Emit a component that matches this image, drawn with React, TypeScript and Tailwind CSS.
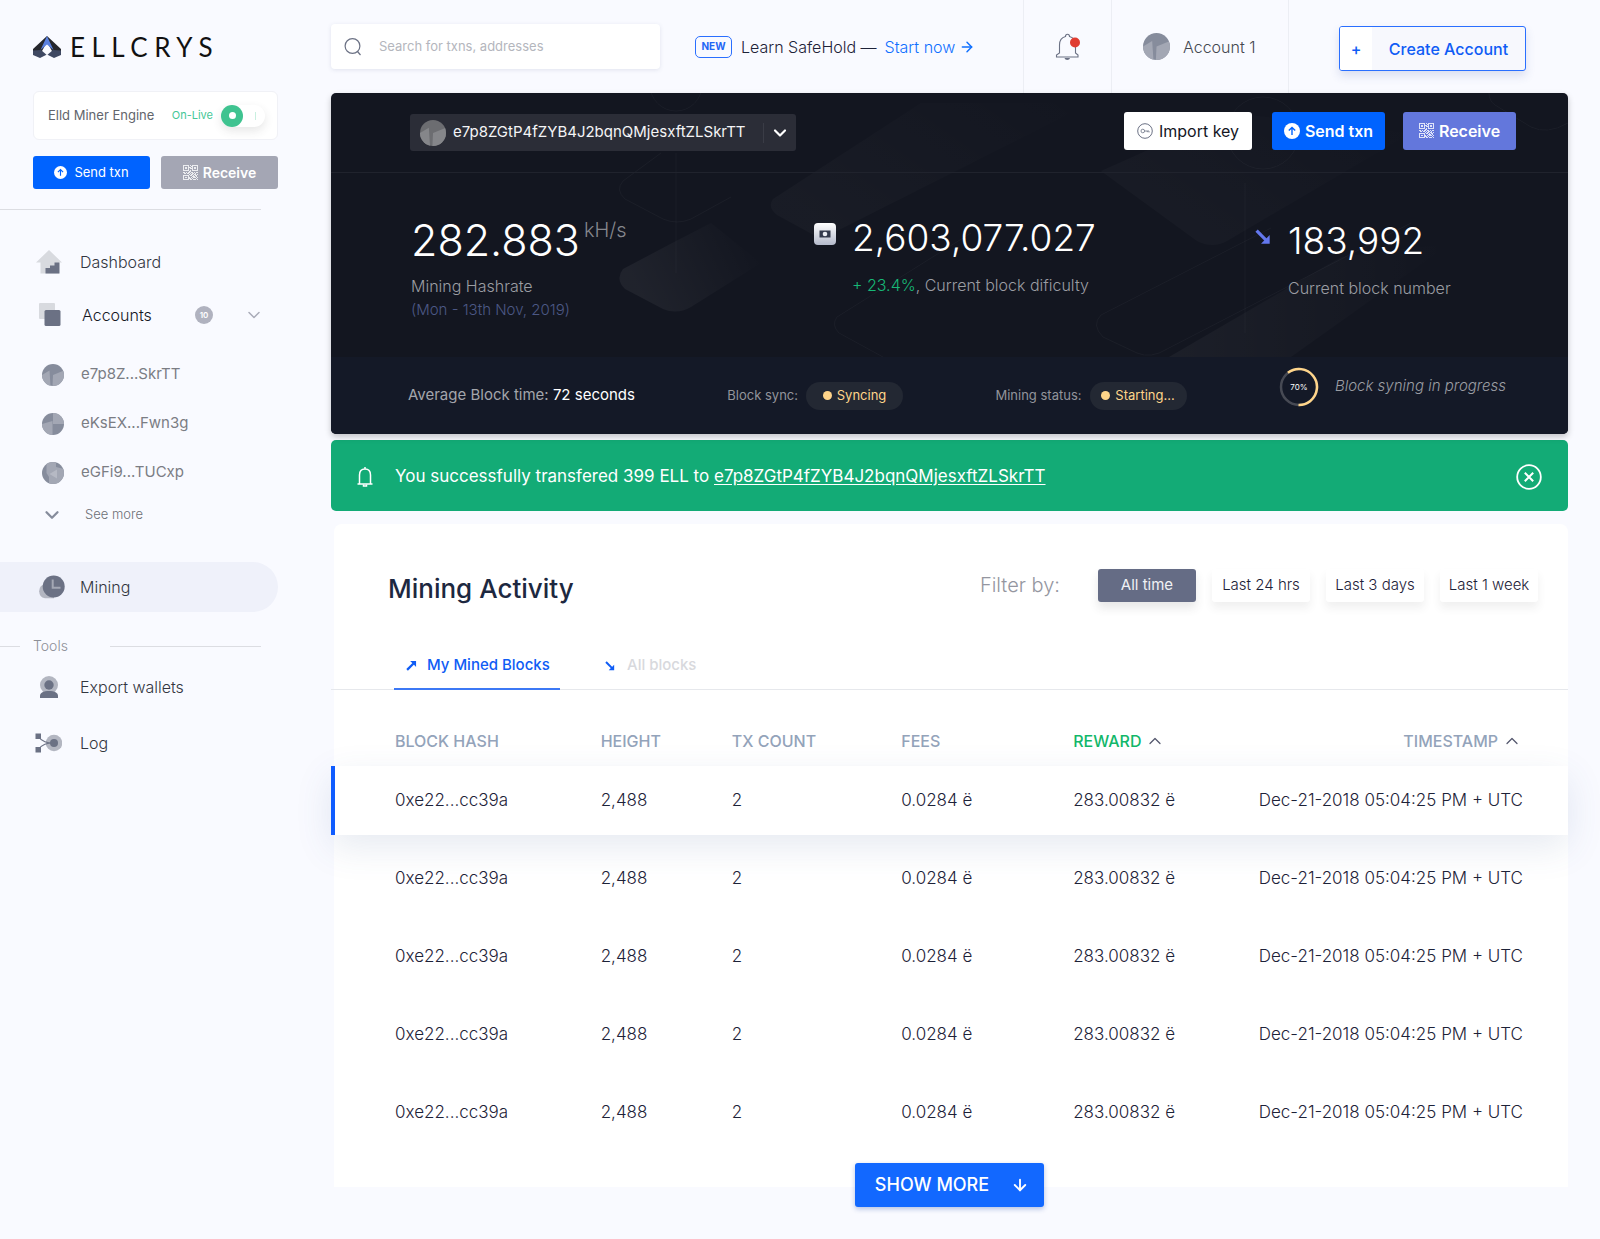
import React from "react";
import { ArrowDown, ArrowRight, ChevronDown, ChevronUp } from "lucide-react";

const ADDRESS = "e7p8ZGtP4fZYB4J2bqnQMjesxftZLSkrTT";

function Identicon({ id, className, variant = 0, tone = "slate" }: { id: string; className?: string; variant?: number; tone?: "slate" | "grey" }) {
  const base = tone === "slate" ? "#868c9c" : "#6c6d71";
  const light = tone === "slate" ? "#a3a7b4" : "#85868a";
  const shapes = [
    ["M0 11 L7.5 6.5 L8.5 22 H0 Z", "M11 11 L22 6.5 V22 H10.5 Z"],
    ["M0 11 L10.5 8 V22 H0 Z", "M11 0 H22 V11 H11 Z"],
    ["M4.5 0 H14 V5 L22 7 V18 L16 22 H7 V15 L4.5 11 Z", "M7.5 12 L15 7.5 V16.5 Z"],
  ][variant];
  return (
    <svg viewBox="0 0 22 22" className={className} aria-hidden="true">
      <clipPath id={id}>
        <circle cx="11" cy="11" r="11" />
      </clipPath>
      <g clipPath={`url(#${id})`}>
        <rect width="22" height="22" fill={base} />
        <path d={shapes[0]} fill={light} />
        <path d={shapes[1]} fill={variant === 2 ? "#b6b9c4" : light} />
      </g>
    </svg>
  );
}

const QR = [
  "111111010111111",
  "100001001100001",
  "101101110101101",
  "101101011101101",
  "100001000100001",
  "111111010111111",
  "000000110000000",
  "110101101101011",
  "011011010110100",
  "000000101101101",
  "111111011010110",
  "100001000111010",
  "101101101011101",
  "100001110100010",
  "111111011011101",
];

function QrIcon({ className }: { className?: string }) {
  return (
    <svg viewBox="0 0 15 15" className={className} fill="currentColor" aria-hidden="true">
      {QR.flatMap((row, y) => row.split("").map((c, x) => (c === "1" ? <rect key={`${x}-${y}`} x={x} y={y} width="1" height="1" /> : null)))}
    </svg>
  );
}

function UpCircle({ className }: { className?: string }) {
  return (
    <svg viewBox="0 0 16 16" className={className} aria-hidden="true">
      <circle cx="8" cy="8" r="8" fill="#fff" />
      <path d="M8 12 V4.6 M4.8 7.6 L8 4.4 L11.2 7.6" fill="none" stroke="#0063ff" strokeWidth="1.4" />
    </svg>
  );
}

function DiagonalArrow({ className, down = false }: { className?: string; down?: boolean }) {
  return (
    <svg viewBox="0 0 12 12" className={className} aria-hidden="true">
      <g transform={down ? "matrix(1 0 0 -1 0 12)" : undefined}>
        <path d="M1.200 10.800 L8.500 3.500" fill="none" stroke="currentColor" strokeWidth="2.400" />
        <path d="M4.500 1 H11 V7.500 L9 5.500 L6.500 3 Z" fill="currentColor" />
      </g>
    </svg>
  );
}

function Logo() {
  return (
    <a href="#" className="flex items-center gap-[9px] text-[#111]">
      <svg viewBox="0 0 28 22" className="h-[22px] w-7" aria-hidden="true">
        <path d="M14 0 L0 13 V19 L9 15 L14 6 L19 15 L28 19 V13 Z" fill="#26272c" />
        <path d="M0 14.500 L8 14 L13.500 18.700 L7 22 L0 19 Z" fill="#3f4862" />
        <path d="M28 14.500 L20 14 L14.500 18.700 L21 22 L28 19 Z" fill="#3f4862" />
        <path d="M14 0 L20.500 14 L14 8.500 L7.500 14 Z" fill="#5b80de" />
      </svg>
      <span className="font-['Lato',sans-serif] text-[26px] leading-[22px] tracking-[0.25em]">ELLCRYS</span>
    </a>
  );
}

function Sidebar() {
  const accounts = ["e7p8Z...SkrTT", "eKsEX...Fwn3g", "eGFi9...TUCxp"];
  return (
    <aside className="w-[331px] shrink-0">
      <div className="pr-[53px] pl-[33px] pt-9">
        <Logo />
        <label className="mt-[33px] flex h-[49px] items-center rounded-md border border-[#f0f1f6] bg-white pr-3 pl-[14px]">
          <span className="text-[13px] text-[#62656c]">Elld Miner Engine</span>
          <span className="ml-auto text-[11px] text-[#45c797]">On-Live</span>
          <input type="checkbox" role="switch" defaultChecked className="peer sr-only" />
          <span className="ml-2 flex h-[22px] w-11 items-center rounded-full bg-white shadow-[0_4px_10px_rgba(60,60,60,0.12)]">
            <span className="flex size-[22px] items-center justify-center rounded-full bg-[#3fc390]">
              <span className="size-[7px] rounded-full bg-white" />
            </span>
            <span className="ml-3 h-2 w-px bg-[#c9f0e0]" />
          </span>
        </label>
        <div className="mt-4 flex gap-[11px]">
          <button className="flex h-[33px] flex-1 items-center justify-center gap-[7px] rounded-[3px] bg-[#0063ff] text-[13px] text-white">
            <UpCircle className="size-[13px]" />
            Send txn
          </button>
          <button className="flex h-[33px] flex-1 items-center justify-center gap-[5px] rounded-[3px] bg-[#a4a6b4] text-sm font-semibold text-white">
            <QrIcon className="size-[15px] opacity-80" />
            Receive
          </button>
        </div>
      </div>
      <hr className="mt-5 mr-[70px] border-[#dcdde2]" />

      <nav className="pt-[27px] text-base font-light text-[#33363f]">
        <a href="#" className="flex h-[50px] items-center pl-9">
          <svg viewBox="0 0 26 24" className="h-6 w-[26px]" aria-hidden="true">
            <path d="M13 0 L26 12.5 H23 V23.5 H4.5 V12.5 H0 Z" fill="#d8dadf" />
            <path d="M9.5 23.5 V18 H14 V15.5 H18.5 V12.5 H23.5 V23.5 Z" fill="#6b7184" />
          </svg>
          <span className="ml-[18px]">Dashboard</span>
        </a>
        <div className="flex h-14 items-center pr-[67px] pl-[39px]">
          <svg viewBox="0 0 22 24" className="h-6 w-[22px]" aria-hidden="true">
            <rect width="16" height="16" rx="1" fill="#d8dadf" />
            <rect x="5.5" y="7" width="16" height="16" rx="1.5" fill="#6b7184" />
          </svg>
          <a href="#" className="ml-[21px] text-[#14161f]">Accounts</a>
          <span className="mr-[31px] ml-auto flex size-[18px] items-center justify-center rounded-full bg-[#b0b2bf] text-[8px] font-semibold text-white">10</span>
          <button aria-label="Collapse accounts"><ChevronDown className="size-5 text-[#a9abb8]" strokeWidth={1.8} /></button>
        </div>
        <ul className="pt-[7px]">
          {accounts.map((a, i) => (
            <li key={a}>
              <a href="#" className="flex h-[49px] items-center pl-[42px] text-[15px] font-normal text-[#7b7d84]">
                <Identicon id={`side-${i}`} variant={i} className="size-[22px]" />
                <span className="ml-[17px]">{a}</span>
              </a>
            </li>
          ))}
        </ul>
        <button className="mt-[2px] flex h-8 items-center pl-[41px] text-[13px] text-[#6d6f76]">
          <ChevronDown className="size-[22px] text-[#868c9c]" strokeWidth={2.5} />
          <span className="ml-[22px]">See more</span>
        </button>
        <a href="#" className="mt-[31px] mr-[53px] flex h-[50px] items-center rounded-r-full bg-[#eff1fa] pl-[38px]">
          <svg viewBox="0 0 27 24" className="h-6 w-[27px]" aria-hidden="true">
            <path d="M7 9 A7.3 7.3 0 0 0 7 23.3 H16 V9 Z" fill="#b3b6c1" />
            <circle cx="15.7" cy="11.5" r="11" fill="#6b7184" />
            <path d="M14.7 4.5 V12.7 H22.5" fill="none" stroke="#a3a7b4" strokeWidth="2" />
          </svg>
          <span className="ml-[15px]">Mining</span>
        </a>
        <div className="mt-5 mr-[70px] flex h-7 items-center text-sm text-[#8d8f97]">
          <span className="h-px w-5 bg-[#dcdde2]" />
          <span className="ml-[13px] w-[77px]">Tools</span>
          <span className="h-px flex-1 bg-[#dcdde2]" />
        </div>
        <a href="#" className="flex h-[54px] items-center pl-10">
          <svg viewBox="0 0 18 22" className="h-[22px] w-[18px]" aria-hidden="true">
            <circle cx="9" cy="9" r="9" fill="#b3b6c1" />
            <circle cx="9" cy="9" r="4.7" fill="#6b7184" />
            <path d="M0 22 V20 C0 16.5 3.5 15 9 15 C14.5 15 18 16.5 18 20 V22 Z" fill="#6b7184" />
          </svg>
          <span className="ml-[22px]">Export wallets</span>
        </a>
        <a href="#" className="flex h-[57px] items-center pl-[35px]">
          <svg viewBox="0 0 27 20" className="h-5 w-[27px]" aria-hidden="true">
            <circle cx="19" cy="10" r="8.3" fill="#b3b6c1" />
            <path d="M3 3 C7 9 12 10 19 10 M3 17 C7 11 12 10 19 10" fill="none" stroke="#6b7184" strokeWidth="1.2" />
            <circle cx="19" cy="10" r="4" fill="#6b7184" />
            <rect x="0.5" y="0.5" width="5.5" height="5.5" fill="#6b7184" />
            <rect x="0.5" y="14" width="5.5" height="5.5" fill="#6b7184" />
          </svg>
          <span className="ml-[18px]">Log</span>
        </a>
      </nav>
    </aside>
  );
}

function Header() {
  return (
    <header className="flex h-[93px] items-stretch">
      <label className="mt-6 flex h-[45px] w-[329px] shrink-0 items-center rounded bg-white pl-[13px] shadow-[0_1px_4px_rgba(60,70,120,0.13)]">
        <svg viewBox="0 0 18 18" className="size-[18px]" fill="none" stroke="#6b7184" strokeWidth="1.2" aria-hidden="true">
          <circle cx="8.5" cy="8" r="7.4" />
          <path d="M13.5 13.5 L16.5 17" />
        </svg>
        <input type="search" aria-label="Search" placeholder="Search for txns, addresses" className="ml-[17px] min-w-0 flex-1 bg-transparent text-[13px] text-[#33363f] outline-none placeholder:text-[#b4b6bd]" />
      </label>
      <div className="ml-[35px] flex items-center whitespace-nowrap">
        <span className="flex h-[22px] w-[37px] items-center justify-center rounded-[5px] border border-[#2a6fff] text-[10px] font-bold text-[#1f66f5]">NEW</span>
        <span className="ml-[9px] text-base font-light text-[#1d2238]">Learn SafeHold —</span>
        <a href="#" className="ml-2 flex items-center gap-1 text-base font-light text-[#0f70ff]">
          Start now
          <ArrowRight className="size-4" strokeWidth={2.2} />
        </a>
      </div>
      <button aria-label="Notifications" className="ml-auto flex w-[88px] items-center justify-center border-l border-[#eceef4]">
        <svg viewBox="0 0 26 28" className="h-7 w-[26px]" aria-hidden="true">
          <path d="M1.5 24 H23 V22 L20.5 20 V12 C20.5 7 18 4.5 14.5 3.5 C14.5 0.500 10.5 0.500 10.5 3.5 C6.5 4.5 4.5 7 4.5 12 V20 L1.5 22 Z" fill="none" stroke="#6b7184" strokeWidth="1.1" />
          <path d="M9.5 25 H15 C14.5 27.5 10 27.5 9.5 25 Z" fill="#6b7184" />
          <circle cx="20" cy="9.5" r="5" fill="#e03c31" />
        </svg>
      </button>
      <a href="#" className="flex w-[178px] shrink-0 items-center border-x border-[#eceef4] pl-[31px]">
        <Identicon id="header" className="size-[27px]" />
        <span className="ml-[13px] text-base font-light text-[#44474f]">Account 1</span>
      </a>
      <div className="flex w-[279px] shrink-0 items-start pt-[26px] pl-[50px]">
        <button className="flex h-[45px] w-[187px] items-stretch overflow-hidden rounded-[3px] border border-[#2a6fff] bg-[#f7f8fd] text-base font-medium text-[#0f5cf5] shadow-[0_5px_10px_rgba(60,80,160,0.16)]">
          <span className="flex w-8 items-center justify-center bg-white">+</span>
          <span className="flex flex-1 items-center justify-center">Create Account</span>
        </button>
      </div>
    </header>
  );
}

function PanelPattern() {
  return (
    <svg viewBox="0 0 1237 264" preserveAspectRatio="xMidYMin slice" className="pointer-events-none absolute inset-x-0 top-0 h-[264px] w-full" aria-hidden="true">
      <defs>
        <linearGradient id="pp-a" x1="0" y1="0.6" x2="1" y2="0">
          <stop offset="0" stopColor="#fff" stopOpacity="0.025" />
          <stop offset="1" stopColor="#fff" stopOpacity="0" />
        </linearGradient>
        <linearGradient id="pp-b" x1="0" y1="0.3" x2="1" y2="0">
          <stop offset="0" stopColor="#fff" stopOpacity="0.055" />
          <stop offset="0.9" stopColor="#fff" stopOpacity="0" />
        </linearGradient>
        <linearGradient id="pp-c" x1="0" y1="0" x2="1" y2="0">
          <stop offset="0" stopColor="#fff" stopOpacity="0.04" />
          <stop offset="1" stopColor="#fff" stopOpacity="0" />
        </linearGradient>
      </defs>
      <g fill="none" stroke="#fff" strokeOpacity="0.035">
        <path d="M330 60 L292 88 Q284 97 294 106 L332 126 Q346 132 360 126 L400 104" />
        <path d="M640 140 L506 224 Q500 232 508 240 L552 264" />
        <path d="M940 135 L770 222 Q760 232 772 244 L806 260 Q820 266 836 256 L1080 130" />
        <path d="M1158 0 Q1158 8 1164 12 L1200 34 Q1216 42 1237 30" />
        <path d="M345 60 V180 M914 90 V240" />
        <circle cx="345" cy="-8" r="26" />
        <circle cx="932" cy="40" r="36" />
      </g>
      <path d="M345 148 L292 176 Q284 186 294 196 L332 216 Q346 222 360 214 L430 170 L380 130 Z" fill="url(#pp-b)" />
      <path d="M590 10 L442 106 Q436 114 446 122 L490 146 L760 10 Z" fill="url(#pp-a)" />
      <path d="M838 264 L1010 164 L1120 150 L960 264 Z" fill="url(#pp-c)" />
      <path d="M770 78 L866 148 Q882 156 896 148 L1080 40 L900 20 Z" fill="url(#pp-a)" />
    </svg>
  );
}

function StatusPill({ label, value }: { label: string; value: string }) {
  return (
    <div className="flex items-center gap-2 text-[13px] text-[#92949b]">
      {label}
      <span className="flex h-7 w-[97px] items-center justify-center gap-[5px] rounded-full bg-[#232833] text-[#ffd58a]">
        <span className="size-[9px] rounded-full bg-[#ffd58a]" />
        {value}
      </span>
    </div>
  );
}

function MiningPanel() {
  return (
    <section className="relative overflow-hidden rounded-[5px] bg-[#131620] shadow-[0_3px_6px_rgba(0,0,0,0.22)]">
      <PanelPattern />
      <div className="relative flex h-20 items-center border-b border-[#20232d] pr-[52px] pl-[79px]">
        <label className="relative flex h-[37px] w-[386px] items-center rounded-[3px] bg-[#2b2d37] pl-[10px]">
          <Identicon id="panel" tone="grey" className="size-[26px]" />
          <select aria-label="Account" className="ml-[7px] h-full flex-1 appearance-none bg-transparent text-[15px] text-[#f4f4f6] outline-none">
            <option>{ADDRESS}</option>
          </select>
          <span className="pointer-events-none absolute right-0 flex h-5 w-[33px] items-center justify-center border-l border-[#3a3c46]">
            <ChevronDown className="size-5 text-white" strokeWidth={2.6} />
          </span>
        </label>
        <div className="ml-auto flex pb-1 text-base">
          <button className="flex h-[38px] w-32 items-center justify-center gap-[6px] rounded-[3px] bg-white text-[#14161f]">
            <svg viewBox="0 0 16 16" className="size-4" fill="none" stroke="#6b7184" aria-hidden="true">
              <circle cx="8" cy="8" r="7.3" />
              <circle cx="5.8" cy="8" r="1.8" strokeWidth="0.8" />
              <path d="M7.6 8 H12 V9.5 M10.3 8 V9.2" strokeWidth="0.8" />
            </svg>
            Import key
          </button>
          <button className="ml-5 flex h-[38px] w-[113px] items-center justify-center gap-[5px] rounded-[3px] bg-[#0063ff] font-semibold text-white">
            <UpCircle className="size-4" />
            Send txn
          </button>
          <button className="ml-[18px] flex h-[38px] w-[113px] items-center justify-center gap-[5px] rounded-[3px] bg-[#6377dc] font-semibold text-white">
            <QrIcon className="size-[15px] opacity-80" />
            Receive
          </button>
        </div>
      </div>

      <div className="relative grid h-46 grid-cols-[403fr_441fr_313fr] pl-20 text-[#9b9da3]">
        <div className="pt-[42px]">
          <p className="flex items-start gap-1 leading-[50px]">
            <span className="text-[43px] font-light text-white">282.883</span>
            <span className="text-xl leading-[30px] font-light text-[#85878d]">kH/s</span>
          </p>
          <p className="mt-[9px] text-base leading-6 font-light">Mining Hashrate</p>
          <p className="text-[15px] leading-6 font-light text-[#4c5885]">(Mon - 13th Nov, 2019)</p>
        </div>
        <div className="flex pt-10">
          <svg viewBox="0 0 22 22" className="mt-[10px] size-[22px] shrink-0" aria-hidden="true">
            <defs>
              <linearGradient id="safe" x1="0" y1="0" x2="0" y2="1">
                <stop offset="0" stopColor="#fff" />
                <stop offset="1" stopColor="#b4bacb" />
              </linearGradient>
            </defs>
            <rect width="22" height="22" rx="4" fill="url(#safe)" />
            <rect x="5.5" y="7.5" width="11" height="7" fill="#343a4d" />
            <circle cx="11" cy="11" r="2.3" fill="#eceef4" />
          </svg>
          <div className="ml-4">
            <p className="text-[37px] leading-[50px] font-light text-white">2,603,077.027</p>
            <p className="mt-[10px] text-base leading-6 font-light"><span className="text-[#17b877]">+ 23.4%</span>, Current block dificulty</p>
          </div>
        </div>
        <div className="flex pt-[43px]">
          <DiagonalArrow down className="mt-[13px] size-4 shrink-0 text-[#6377ee]" />
          <div className="ml-[17px]">
            <p className="text-[37px] leading-[50px] font-light text-white">183,992</p>
            <p className="mt-[10px] text-base leading-6 font-light">Current block number</p>
          </div>
        </div>
      </div>

      <div className="relative flex h-[77px] items-center justify-between bg-[#141927] pr-[62px] pl-[77px]">
        <p className="text-[15px] text-[#a3a5ab]">Average Block time: <span className="text-white">72 seconds</span></p>
        <StatusPill label="Block sync:" value="Syncing" />
        <StatusPill label="Mining status:" value="Starting..." />
        <div className="flex items-center gap-4 pb-[18px]">
          <svg viewBox="0 0 40 40" className="size-10" aria-hidden="true">
            <circle cx="20" cy="20" r="18" fill="none" stroke="#474a54" strokeWidth="2.5" />
            <circle cx="20" cy="20" r="18" fill="none" stroke="#ffd58a" strokeWidth="2.5" pathLength="100" strokeDasharray="61 39" transform="rotate(-128 20 20)" />
            <text x="20" y="23" textAnchor="middle" fontSize="8" fill="#fff">70%</text>
          </svg>
          <p className="text-[15px] font-light text-[#9b9da3] italic">Block syning in progress</p>
        </div>
      </div>
    </section>
  );
}

function SuccessBanner() {
  return (
    <section role="status" className="mt-[6px] flex h-[71px] items-center rounded-[5px] bg-[#13ab76] px-[26px] pt-[2px] text-white">
      <svg viewBox="0 0 16 20" className="h-5 w-4" fill="none" stroke="currentColor" strokeWidth="1.5" aria-hidden="true">
        <path d="M0.500 17 H15.5 M2.5 17 V8 C2.5 4.5 4.5 2 8 2 C11.5 2 13.5 4.5 13.5 8 V17 M8 0 V2" />
        <path d="M6.5 17.5 V19 H9.5 V17.5" />
      </svg>
      <p className="ml-[22px] flex-1 text-[17px]">
        You successfully transfered 399 ELL to <a href="#" className="underline underline-offset-2">{ADDRESS}</a>
      </p>
      <button aria-label="Dismiss">
        <svg viewBox="0 0 26 26" className="size-[26px]" fill="none" stroke="currentColor" aria-hidden="true">
          <circle cx="13" cy="13" r="11.8" strokeWidth="1.8" />
          <path d="M8.8 8.8 L17.2 17.2 M17.2 8.8 L8.8 17.2" strokeWidth="2" />
        </svg>
      </button>
    </section>
  );
}

const FILTERS = ["Last 24 hrs", "Last 3 days", "Last 1 week"];

function Activity() {
  return (
    <section className="mt-[13px] ml-[3px] rounded-t-lg bg-white pb-[31px]">
      <div className="flex items-center pt-[38px] pr-[30px] pl-[54px]">
        <h1 className="mt-2 text-[26px] leading-[38px] font-medium text-[#1d2840]">Mining Activity</h1>
        <span className="mr-[38px] ml-auto text-xl font-light text-[#9496a0]">Filter by:</span>
        <div className="flex gap-4 text-[15px]">
          <button className="h-[33px] w-[98px] rounded-[3px] bg-[#656c85] text-[#f0f1f5] shadow-[0_6px_10px_rgba(60,60,60,0.12)]">All time</button>
          {FILTERS.map((f) => (
            <button key={f} className="h-[33px] w-[98px] rounded-[3px] bg-white font-light text-[#1d2238] shadow-[0_6px_8px_rgba(60,60,60,0.08)]">{f}</button>
          ))}
        </div>
      </div>

      <div role="tablist" className="mt-[34px] -ml-[3px] flex h-[48px] border-b border-[#e6e8ec] pl-[63px] text-[15px] font-medium">
        <button role="tab" aria-selected="true" className="-mb-px flex w-[166px] items-center border-b-2 border-[#3c78f5] pl-3 text-[#0f5cf5]">
          <DiagonalArrow className="mr-[10px] size-[11px]" />
          My Mined Blocks
        </button>
        <button role="tab" aria-selected="false" className="ml-[45px] flex items-center text-[#d8d9dd]">
          <DiagonalArrow down className="mr-3 size-[10px] text-[#0f5cf5]" />
          All blocks
        </button>
      </div>

      <div className="-ml-[3px] pt-[25px]">
        <table className="w-full table-fixed border-separate border-spacing-x-0 border-spacing-y-[9px] text-left">
          <colgroup>
            <col className="w-[21.8%]" />
            <col className="w-[10.6%]" />
            <col className="w-[13.7%]" />
            <col className="w-[13.9%]" />
            <col className="w-[12%]" />
            <col />
          </colgroup>
          <thead>
            <tr className="h-[33px] text-base text-[#93a3ba]">
              <th className="pl-16 font-medium">BLOCK HASH</th>
              <th className="font-medium">HEIGHT</th>
              <th className="font-medium">TX COUNT</th>
              <th className="font-medium">FEES</th>
              <th className="font-medium">
                <button className="flex items-center gap-[3px] text-[#12b76a]">REWARD <ChevronUp className="size-5 text-[#55586e]" strokeWidth={1.5} /></button>
              </th>
              <th className="pr-[46px] font-medium">
                <button className="ml-auto flex items-center gap-1">TIMESTAMP <ChevronUp className="size-5 text-[#55586e]" strokeWidth={1.5} /></button>
              </th>
            </tr>
          </thead>
          <tbody>
            {[0, 1, 2, 3, 4].map((i) => (
              <tr key={i} className={i === 0 ? "relative h-[69px] bg-white text-[17px] font-light text-[#1d2238] shadow-[0_12px_36px_rgba(60,90,150,0.13)]" : "relative h-[69px] text-[17px] font-light text-[#1d2238]"}>
                <td className={i === 0 ? "border-l-4 border-[#0f5cff] pl-15" : "pl-16"}>0xe22...cc39a</td>
                <td>2,488</td>
                <td>2</td>
                <td>0.0284 ë</td>
                <td>283.00832 ë</td>
                <td className="pr-[45px] text-right">Dec-21-2018 05:04:25 PM + UTC</td>
              </tr>
            ))}
          </tbody>
        </table>
      </div>
    </section>
  );
}

export default function App() {
  return (
    <div className="flex min-h-screen bg-[#f9faff] font-['Inter',sans-serif]">
      <Sidebar />
      <main className="min-w-0 flex-1 pr-8 pb-[31px]">
        <Header />
        <MiningPanel />
        <SuccessBanner />
        <Activity />
        <div className="relative -mt-6 flex justify-center">
          <button className="flex h-11 items-center gap-[22px] rounded-[3px] bg-[#1268ff] pr-[15px] pl-5 text-lg font-medium text-white shadow-[0_2px_5px_rgba(20,60,160,0.3)]">
            SHOW MORE
            <ArrowDown className="size-[18px]" strokeWidth={2.5} />
          </button>
        </div>
      </main>
    </div>
  );
}
